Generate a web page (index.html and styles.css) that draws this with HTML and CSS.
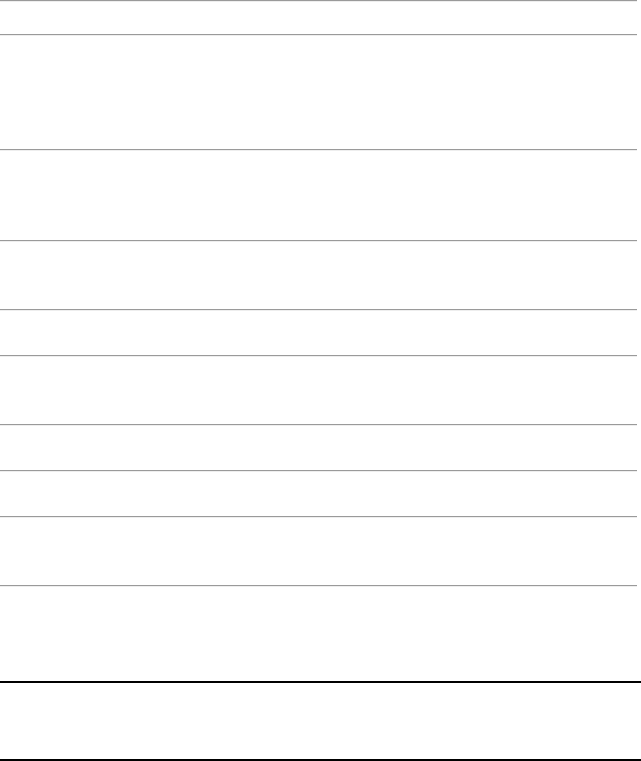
FILE: index.html
```html
<!DOCTYPE html>
<html lang="en">
<head>
<meta charset="utf-8">
<title>Page</title>
<link rel="stylesheet" href="styles.css">
</head>
<body>
<div class="page">
  <div class="rows">
    <div class="rule"></div>
    <div class="gap h32"></div>
    <div class="rule"></div>
    <div class="gap h113"></div>
    <div class="rule"></div>
    <div class="gap h89"></div>
    <div class="rule"></div>
    <div class="gap h67"></div>
    <div class="rule"></div>
    <div class="gap h44"></div>
    <div class="rule"></div>
    <div class="gap h67"></div>
    <div class="rule"></div>
    <div class="gap h44"></div>
    <div class="rule"></div>
    <div class="gap h44"></div>
    <div class="rule"></div>
    <div class="gap h67"></div>
    <div class="rule"></div>
  </div>
  <div class="gap h94"></div>
  <div class="dark"></div>
  <div class="gap h76"></div>
  <div class="dark"></div>
</div>
</body>
</html>
```

FILE: styles.css
```css
html, body {
  margin: 0;
  padding: 0;
  background: #ffffff;
  font-family: "Liberation Sans", Arial, sans-serif;
}
.page {
  display: flex;
  flex-direction: column;
  width: 641px;
}
.rows {
  display: flex;
  flex-direction: column;
  width: 637px;
}
.rule {
  height: 0;
  border-top: 1px solid #9a9a9a;
  border-bottom: 1px solid #eeeeee;
}
.dark {
  height: 0;
  border-top: 2px solid #000000;
}
.gap { flex: none; }
.h32 { height: 32px; }
.h113 { height: 113px; }
.h89 { height: 89px; }
.h67 { height: 67px; }
.h44 { height: 44px; }
.h94 { height: 94px; }
.h76 { height: 76px; }
```
